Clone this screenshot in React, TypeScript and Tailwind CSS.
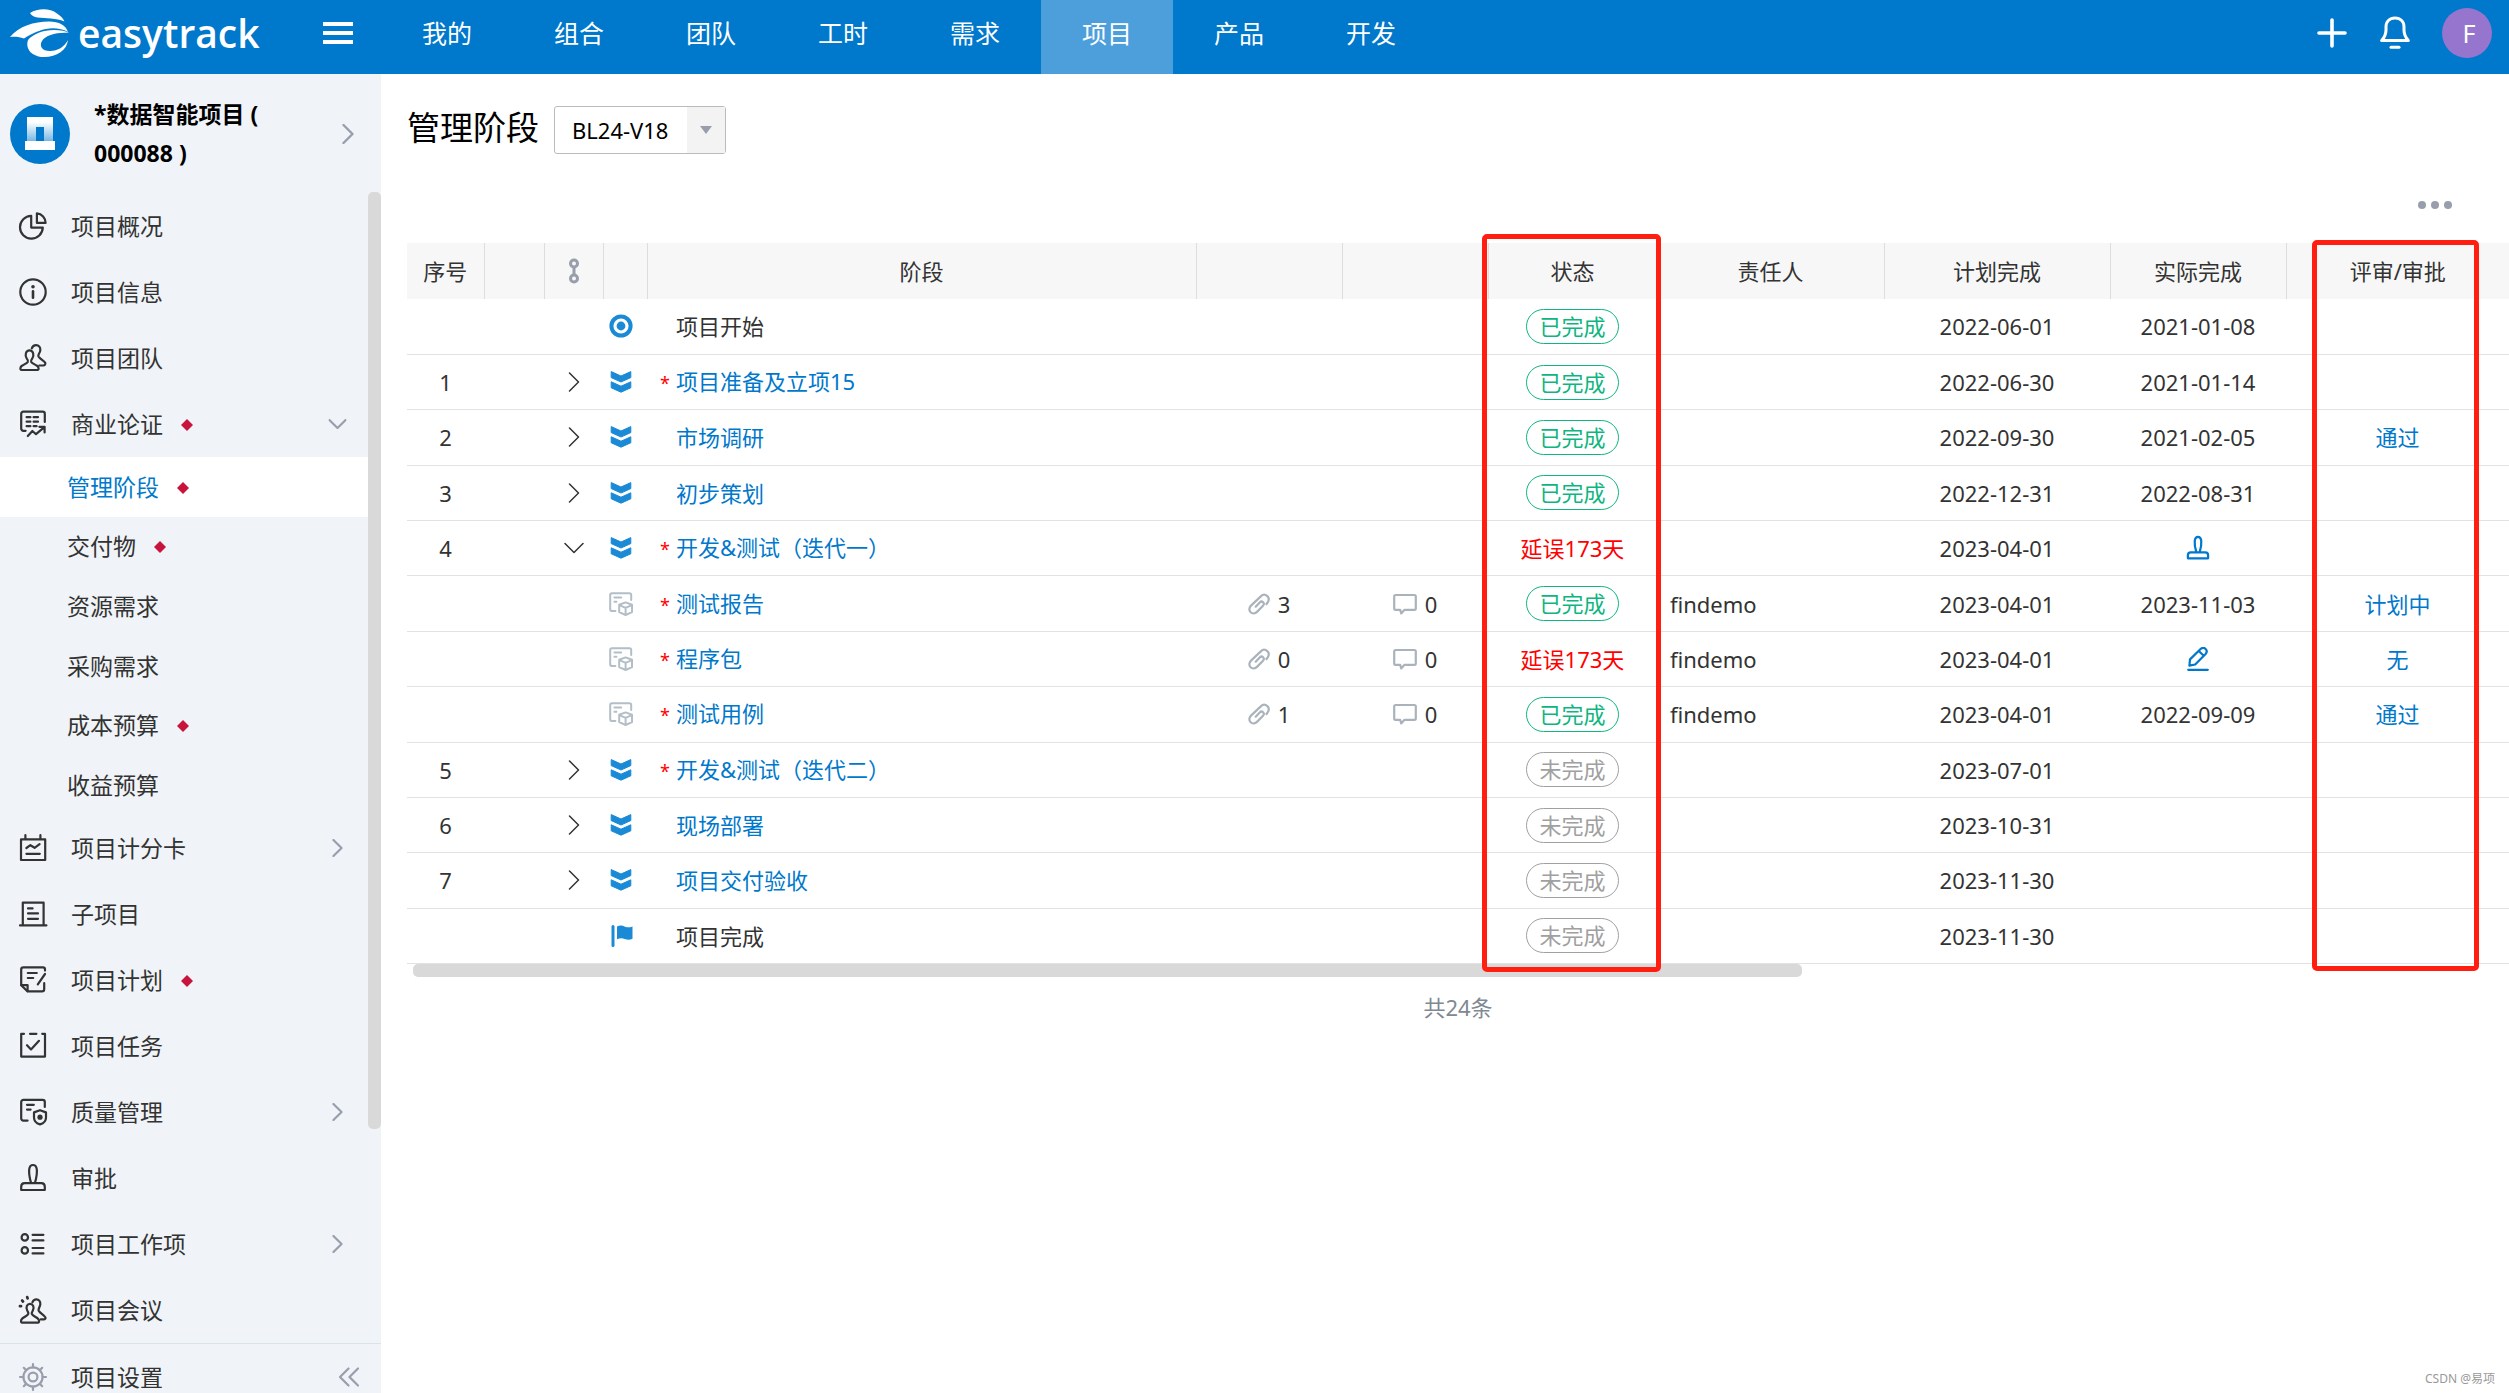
import { useState } from 'react';
import type { ReactNode } from 'react';
import { clsx } from 'clsx';

interface IconProps {
  className?: string;
}

interface MenuItem {
  label: string;
  icon: ReactNode;
  marked?: boolean;
  expandable?: boolean;
  children?: { label: string; marked?: boolean }[];
}

type RowKind = 'start' | 'stage' | 'deliverable' | 'end';

interface StageRow {
  no?: string;
  kind: RowKind;
  open?: boolean;
  required?: boolean;
  name: string;
  files?: number;
  comments?: number;
  status: 'done' | 'todo' | 'late';
  owner?: string;
  planned: string;
  actual?: string;
  action?: 'stamp' | 'edit';
  review?: string;
}

// 28px line icons used in the side menu
function MenuIcon({ children, className }: { children: ReactNode; className?: string }) {
  return (
    <svg
      viewBox="0 0 28 28"
      fill="none"
      stroke="currentColor"
      strokeWidth="2.2"
      strokeLinecap="round"
      strokeLinejoin="round"
      className={clsx('size-7 shrink-0 overflow-visible', className)}
      aria-hidden="true"
    >
      {children}
    </svg>
  );
}

const stampPaths = (
  <>
    <path d="M12 18.6C10.5 13.6 9.8 9.2 10.2 5.4 10.6 2.4 12 1 14 1s3.4 1.4 3.8 4.4C18.2 9.2 17.5 13.6 16 18.6" />
    <path d="M5.5 19.2h17c2 0 3.3 1.6 3.3 3.6V26H2.2v-3.2c0-2 1.3-3.6 3.3-3.6z" />
  </>
);

const teamPaths = (
  <>
    <path d="M2.4 26c-1.3 0-1.4-2.8.2-4 2.2-1.6 5.4-2.6 6.3-4.2.5-1-.2-2-1.2-3.4-1-1.6-1.3-3.5-.8-5.2.6-1.9 2-2.9 3.6-2.9s3 1 3.6 2.9c.5 1.7.2 3.6-.8 5.2-1 1.4-1.7 2.4-1.2 3.4.9 1.6 4.1 2.6 6.3 4.2 1.6 1.2 1.5 4 .2 4z" />
    <path d="M12.8 4.4c.7-2.2 2.2-3.3 4.2-3.3 3 0 4.6 2.5 4.3 5.2-.3 2.6-2.3 4-1.9 6 .5 2.2 6 4.5 6.8 6.4.6 1.6-.4 2.8-1.9 2.8h-4" />
  </>
);

const MENU: MenuItem[] = [
  {
    label: '项目概况',
    icon: (
      <MenuIcon>
        <path d="M12.2 3.8A11.4 11.4 0 1 0 23.8 15.6H12.2z" />
        <path d="M17.9 1.3a9.6 9.6 0 0 1 8.7 9.6h-8.7z" />
      </MenuIcon>
    ),
  },
  {
    label: '项目信息',
    icon: (
      <MenuIcon>
        <circle cx="14" cy="14" r="12.7" />
        <path d="M14 13.4v6.4" strokeWidth="2.6" />
        <circle cx="14" cy="8.8" r="1.8" fill="currentColor" stroke="none" />
      </MenuIcon>
    ),
  },
  { label: '项目团队', icon: <MenuIcon>{teamPaths}</MenuIcon> },
  {
    label: '商业论证',
    marked: true,
    icon: (
      <MenuIcon>
        <path d="M6.6 20.8H4.4A2.2 2.2 0 0 1 2.2 18.6V3.9a2.2 2.2 0 0 1 2.2-2.2h19.2a2.2 2.2 0 0 1 2.2 2.2v8" />
        <path d="M7.6 7.2h3.8M14.6 7.2h4.4M7.6 11.7h3.8M14.6 11.7h4.4M7.6 16.2h3.8M14.6 16.2h3" />
        <path d="m8.8 26 4.6-5 3.6 3.2 8.4-7M20.4 16.8h5.2v5.6" />
      </MenuIcon>
    ),
    children: [
      { label: '管理阶段', marked: true },
      { label: '交付物', marked: true },
      { label: '资源需求' },
      { label: '采购需求' },
      { label: '成本预算', marked: true },
      { label: '收益预算' },
    ],
  },
  {
    label: '项目计分卡',
    expandable: true,
    icon: (
      <MenuIcon>
        <path d="M2 5.4h24.2V26H2zM6.4 1.2v4M21.4 1.2v4M7.4 19.8h13.4" />
        <path d="m7.4 14 4-2.8 4.2 2.6 5-3.6" />
      </MenuIcon>
    ),
  },
  {
    label: '子项目',
    icon: (
      <MenuIcon>
        <path d="M3.8 25.4V2.6h20.8v22.8M1 25.4h26.4" />
        <path d="M9 8.4h4.6M9 13.4h10M9 18.8h10" />
      </MenuIcon>
    ),
  },
  {
    label: '项目计划',
    marked: true,
    icon: (
      <MenuIcon>
        <path d="M26 4.6V3.4a2 2 0 0 0-2-2H4.4a2.2 2.2 0 0 0-2.2 2.2v15.6l6.4 6.2H23a2.2 2.2 0 0 0 2.2-2.2v-6" />
        <path d="M2.4 19.2h6.2v6M8.8 7h9M8.8 12h5.4M26 8l-7.2 10.4" />
      </MenuIcon>
    ),
  },
  {
    label: '项目任务',
    icon: (
      <MenuIcon>
        <path d="M5 1.8H2.2v22.8H26V1.8h-2.8M11 1.8h6.4" />
        <path d="m8 13.2 4 4.2 8-8.6" />
      </MenuIcon>
    ),
  },
  {
    label: '质量管理',
    expandable: true,
    icon: (
      <MenuIcon>
        <path d="M8.6 22.6H4.4a2.2 2.2 0 0 1-2.2-2.2V4a2.2 2.2 0 0 1 2.2-2.2h19.2A2.2 2.2 0 0 1 25.8 4v5" />
        <path d="M8 6.8h6.8M8 11.6h3.6" />
        <path d="m21 12.2 6 2.2v5c0 3.6-2.8 6-6 7-3.2-1-6-3.4-6-7v-5z" />
        <circle cx="21" cy="19.2" r="2.6" fill="currentColor" stroke="none" />
      </MenuIcon>
    ),
  },
  { label: '审批', icon: <MenuIcon>{stampPaths}</MenuIcon> },
  {
    label: '项目工作项',
    expandable: true,
    icon: (
      <MenuIcon>
        <circle cx="5.8" cy="7.4" r="3.2" />
        <circle cx="5.8" cy="20.4" r="3.2" />
        <path d="M13.6 4.8h10.8M13.6 10.4h10.8M13.6 18h10.8M13.6 23.4h10.8" />
      </MenuIcon>
    ),
  },
  {
    label: '项目会议',
    icon: (
      <MenuIcon>
        <path d="M3 26.6c-1.3 0-1.4-2.6.2-4 2-1.8 5.2-2.8 6-4.6.5-1.2-.3-2.2-1-3.6-1.7-3.6 0-6.6 2.8-6.6s4.6 3 2.9 6.6c-.8 1.4-1.5 2.4-1 3.6.8 1.8 4 2.8 6 4.6 1.6 1.4 1.5 4 .2 4z" />
        <path d="M13.4 6.4c.8-2 2-3 3.8-3 3 0 4.4 2.5 4.1 5-.3 2.4-2 3.8-1.7 5.8.4 2.2 5.8 5 6.8 7.2.5 1.2-.4 2-1.6 2h-3" />
        <path d="m8.2 1.2.4 1.2M3.2 4.6l.8.9M1 10.2h1" strokeWidth="2.8" />
      </MenuIcon>
    ),
  },
];

const STAGES: StageRow[] = [
  { kind: 'start', name: '项目开始', status: 'done', planned: '2022-06-01', actual: '2021-01-08' },
  { no: '1', kind: 'stage', required: true, name: '项目准备及立项15', status: 'done', planned: '2022-06-30', actual: '2021-01-14' },
  { no: '2', kind: 'stage', name: '市场调研', status: 'done', planned: '2022-09-30', actual: '2021-02-05', review: '通过' },
  { no: '3', kind: 'stage', name: '初步策划', status: 'done', planned: '2022-12-31', actual: '2022-08-31' },
  { no: '4', kind: 'stage', open: true, required: true, name: '开发&测试（迭代一）', status: 'late', planned: '2023-04-01', action: 'stamp' },
  { kind: 'deliverable', required: true, name: '测试报告', files: 3, comments: 0, status: 'done', owner: 'findemo', planned: '2023-04-01', actual: '2023-11-03', review: '计划中' },
  { kind: 'deliverable', required: true, name: '程序包', files: 0, comments: 0, status: 'late', owner: 'findemo', planned: '2023-04-01', action: 'edit', review: '无' },
  { kind: 'deliverable', required: true, name: '测试用例', files: 1, comments: 0, status: 'done', owner: 'findemo', planned: '2023-04-01', actual: '2022-09-09', review: '通过' },
  { no: '5', kind: 'stage', required: true, name: '开发&测试（迭代二）', status: 'todo', planned: '2023-07-01' },
  { no: '6', kind: 'stage', name: '现场部署', status: 'todo', planned: '2023-10-31' },
  { no: '7', kind: 'stage', name: '项目交付验收', status: 'todo', planned: '2023-11-30' },
  { kind: 'end', name: '项目完成', status: 'todo', planned: '2023-11-30' },
];

const NAV = ['我的', '组合', '团队', '工时', '需求', '项目', '产品', '开发'];

function Chevron({ className }: IconProps) {
  return (
    <svg viewBox="0 0 12 20" fill="none" stroke="currentColor" className={className} aria-hidden="true">
      <path d="m1.5 1 9 9-9 9" strokeLinecap="round" strokeLinejoin="round" />
    </svg>
  );
}

function Diamond() {
  return (
    <svg viewBox="0 0 12 12" className="mt-0.5 ml-[18px] size-3" aria-hidden="true">
      <path d="M6 0l6 6-6 6-6-6z" fill="#c8143c" />
    </svg>
  );
}

function Logo() {
  return (
    <a href="#home" className="flex w-[314px] shrink-0 items-center pl-2.5 text-white">
      <svg viewBox="0 0 60 48" className="h-12 w-[60px]" fill="currentColor" aria-hidden="true">
        <path d="M20 4C28-1 40-1 47 4.500c4 2.500 6 5 7.500 8C46 9 36 9.500 27.500 8.500 24 8 21.500 6.500 20 4z" />
        <path d="M0 28C9 17 24 12.500 39 12.500c10 0 17 4 19 10.500-8-4.500-19-5-29-1-6 2-12 5.500-15 7.500-5-2-10-2-14-1.500z" />
        <path d="M18 31c5-6 15-10 26-10 7 0 12 1 15 3-12-1-23 2-27 8-3 5 0 10 8 10 8 0 14-4 18-11-1 10-11 17-24 17-12 0-19-8-16-17z" />
      </svg>
      <span className="ml-2 font-['Open_Sans'] text-[39px] leading-[48px] font-semibold">easytrack</span>
    </a>
  );
}

function TopBar() {
  return (
    <header className="flex h-[74px] shrink-0 items-stretch bg-[#0078cb] text-white">
      <div className="flex items-center pb-2">
        <Logo />
        <button type="button" aria-label="菜单" className="flex w-[67px] flex-col gap-[5px] pl-[9px]">
          <span className="h-1 w-[30px] bg-white" />
          <span className="h-1 w-[30px] bg-white" />
          <span className="h-1 w-[30px] bg-white" />
        </button>
      </div>
      <nav className="flex">
        {NAV.map((label) => (
          <a
            key={label}
            href={`#${label}`}
            className={clsx(
              'flex w-[132px] items-center justify-center pb-2 text-[25px] leading-[32px]',
              label === '项目' && 'bg-[#4d9fdb]'
            )}
          >
            {label}
          </a>
        ))}
      </nav>
      <div className="ml-auto flex items-center pr-[17px] pb-2">
        <button type="button" aria-label="新建">
          <svg viewBox="0 0 30 30" className="size-[30px]" stroke="currentColor" strokeWidth="3.6" strokeLinecap="round" aria-hidden="true">
            <path d="M15 2v26M2 15h26" />
          </svg>
        </button>
        <button type="button" aria-label="通知" className="ml-[33px]">
          <svg viewBox="0 0 30 34" className="h-[34px] w-[30px]" fill="none" stroke="currentColor" strokeWidth="3" strokeLinecap="round" strokeLinejoin="round" aria-hidden="true">
            <path d="M15 2C9.500 2 6 5.600 6 11v3c0 4-1.200 7-4.300 10.600h26.600C25.200 21 24 18 24 14v-3c0-5.400-3.500-9-9-9z" />
            <path d="M11 31.200h8" />
          </svg>
        </button>
        <button type="button" className="ml-8 size-[50px] rounded-full bg-[#9575cd] pl-1 text-[25px] leading-[50px]">
          F
        </button>
      </div>
    </header>
  );
}

function Sidebar() {
  const [active, setActive] = useState('管理阶段');

  return (
    <aside className="relative flex w-[381px] shrink-0 flex-col bg-[#f0f4f8] text-[23px] leading-7 text-[#333]">
      <div className="flex h-[119px] shrink-0 items-center pl-2.5">
        <span className="flex size-[60px] shrink-0 items-center justify-center rounded-full bg-[#0078cb]">
          <svg viewBox="0 0 32 34" className="h-[34px] w-8" aria-hidden="true">
            <defs>
              <linearGradient id="badge" x1="0" y1="0" x2="0" y2="1">
                <stop offset="0.2" stopColor="#fff" />
                <stop offset="1" stopColor="#6fb4e3" />
              </linearGradient>
            </defs>
            <path d="M3 0h26v25H20V10h-8v15H3z" fill="url(#badge)" />
            <path d="M1 24h30v9H1z" fill="#fff" />
          </svg>
        </span>
        <h2 className="ml-6 w-[230px] text-[23px] leading-[39px] font-bold text-black">*数据智能项目 ( 000088 )</h2>
        <button type="button" aria-label="切换项目" className="ml-[18px] text-[#999eac]">
          <Chevron className="h-5 w-3 stroke-[2.4]" />
        </button>
      </div>

      <ul className="min-h-0 w-[368px] flex-1 overflow-hidden">
        {MENU.map((item) => (
          <li key={item.label}>
            <button type="button" className="flex h-[66px] w-full items-center pr-[25px] pl-[19px] text-left">
              {item.icon}
              <span className="ml-6">{item.label}</span>
              {item.marked && <Diamond />}
              {(item.expandable || item.children) && (
                <Chevron
                  className={clsx('ml-auto h-[18px] w-[11px] stroke-[2.4] text-[#999eac]', item.children && 'rotate-90')}
                />
              )}
            </button>
            {item.children && (
              <ul className="grid h-[358px] grid-rows-6">
                {item.children.map((child) => (
                  <li key={child.label}>
                    <button
                      type="button"
                      onClick={() => setActive(child.label)}
                      className={clsx(
                        'flex h-full w-full items-center pl-[67px]',
                        active === child.label && 'bg-white text-[#0078cb]'
                      )}
                    >
                      {child.label}
                      {child.marked && <Diamond />}
                    </button>
                  </li>
                ))}
              </ul>
            )}
          </li>
        ))}
      </ul>
      <span className="absolute top-[118px] right-0 h-[937px] w-[13px] rounded-[5px] bg-[#d9d9d9]" />

      <div className="flex h-[50px] shrink-0 items-start border-t border-[#dae2ea] pt-[19px] pr-[22px] pl-[19px]">
        <MenuIcon className="text-[#999eac]">
          <circle cx="14" cy="14" r="9.600" />
          <circle cx="14" cy="14" r="4.400" />
          <path d="M14 4.400V1M14 23.600V27M4.400 14H1M23.600 14H27M7.200 7.200 4.800 4.800M20.800 20.800l2.400 2.400M7.200 20.800l-2.400 2.400M20.800 7.200l2.400-2.400" />
        </MenuIcon>
        <a href="#settings" className="ml-6">
          项目设置
        </a>
        <button type="button" aria-label="收起" className="ml-auto flex pt-1 text-[#999eac]">
          <svg viewBox="0 0 20 20" className="size-5" fill="none" stroke="currentColor" strokeWidth="2.2" strokeLinecap="round" strokeLinejoin="round">
            <path d="m9.500 1.500-8.500 8.500 8.500 8.500M19 1.500 10.500 10l8.500 8.500" />
          </svg>
        </button>
      </div>
    </aside>
  );
}

function KindIcon({ kind }: { kind: RowKind }) {
  if (kind === 'start') {
    return (
      <svg viewBox="0 0 24 24" className="size-6" fill="none" aria-hidden="true">
        <circle cx="12" cy="12" r="9.600" stroke="#1a8ad6" strokeWidth="4" />
        <circle cx="12" cy="12" r="4.400" fill="#1a8ad6" />
      </svg>
    );
  }
  if (kind === 'stage') {
    return (
      <svg viewBox="0 0 24 24" className="size-6" fill="#1a8ad6" stroke="#1a8ad6" strokeWidth="1" strokeLinejoin="round" aria-hidden="true">
        <path d="M2.200 1.600 12 6l9.800-4.400v6L12 12 2.200 7.600z" />
        <path d="M2.200 11.800 12 16.200l9.800-4.400v6L12 22.200l-9.800-4.400z" />
      </svg>
    );
  }
  if (kind === 'end') {
    return (
      <svg viewBox="0 0 24 24" className="size-6" fill="#1a8ad6" aria-hidden="true">
        <rect x="2.500" y="1" width="3" height="22" rx="1.500" />
        <path d="M8 2.500c3-1.500 5.500-1 8 .2 2.500 1 4.700.8 7.500-.2v12.300c-3 1.200-5.200 1-7.700.2-2.500-1-5-1-7.800.2z" />
      </svg>
    );
  }
  return (
    <svg viewBox="0 0 24 24" className="size-6" fill="none" stroke="#b4bec6" strokeWidth="2" strokeLinecap="round" strokeLinejoin="round" aria-hidden="true">
      <path d="M6.400 19H3a1.800 1.800 0 0 1-1.800-1.800V3A1.800 1.800 0 0 1 3 1.200h17.400A1.800 1.800 0 0 1 22.200 3v5M5.400 5.600h6.800M5.400 9.800h2" />
      <path d="m16.600 10.400 6.400 2.400v7.400l-6.400 2.800-6.400-2.800v-7.400zM10.400 13.200l6.200 2.600 6.200-2.600M16.600 15.800v6.800" />
    </svg>
  );
}

function ClipIcon() {
  return (
    <svg viewBox="0 0 22 22" className="size-[22px]" fill="none" stroke="#aab3bc" strokeWidth="2.2" strokeLinecap="round" strokeLinejoin="round" aria-hidden="true">
      <path d="m18.500 11 1.200-1.700c1.500-2.200 1.300-4.600-.4-6.200-1.900-1.700-4.600-1.600-6.500.3L3 12.600c-2 2-2.200 4.900-.4 6.700 1.800 1.700 4.500 1.500 6.400-.4l6-6.200c1-1.100 1-2.600.1-3.500-1-.9-2.400-.8-3.400.3l-4 4.200" />
    </svg>
  );
}

function CommentIcon() {
  return (
    <svg viewBox="0 0 24 22" className="h-[22px] w-6" fill="none" stroke="#aab3bc" strokeWidth="2.200" strokeLinejoin="round" aria-hidden="true">
      <path d="M2.600 2h18.800c.8 0 1.400.6 1.400 1.400v12c0 .8-.6 1.400-1.400 1.400H11.500L8.200 20.400l-1-3.600H2.600c-.8 0-1.400-.6-1.400-1.400v-12C1.200 2.600 1.800 2 2.600 2z" />
    </svg>
  );
}

function StatusCell({ status }: { status: StageRow['status'] }) {
  if (status === 'late') return <span className="text-[#f00]">延误173天</span>;
  return (
    <span
      className={clsx(
        'inline-block h-[35px] w-[93px] rounded-full border align-middle leading-[33px]',
        status === 'done' ? 'border-[#0fb57f] text-[#0fb57f]' : 'border-[#a0a0a0] text-[#a0a0a0]'
      )}
    >
      {status === 'done' ? '已完成' : '未完成'}
    </span>
  );
}

function ActionIcon({ action }: { action: 'stamp' | 'edit' }) {
  return (
    <button type="button" aria-label={action === 'stamp' ? '审批' : '编辑'} className="mx-auto block text-[#0078cb]">
      {action === 'stamp' ? (
        <MenuIcon className="size-6! stroke-[2.6]">{stampPaths}</MenuIcon>
      ) : (
        <svg viewBox="0 0 24 24" className="size-6" fill="none" stroke="currentColor" strokeWidth="2.200" strokeLinecap="round" strokeLinejoin="round" aria-hidden="true">
          <path d="M3.400 18.600 4 12.400 14.600 2c1.600-1.500 3.600-1.500 5 0s1.400 3.400 0 4.900L9.200 17.500zM13 4.200l4.800 4.600M2.200 22.800h19.600" />
        </svg>
      )}
    </button>
  );
}

function StageTable() {
  const head = 'border-r border-[#ddd] font-normal';

  return (
    <div className="relative">
      <table className="h-[721px] w-full table-fixed border-collapse text-center text-[22px] leading-7 text-[#333]">
        <colgroup>
          <col className="w-[77px]" />
          <col className="w-[60px]" />
          <col className="w-[59px]" />
          <col className="w-[44px]" />
          <col />
          <col className="w-[146px]" />
          <col className="w-[146px]" />
          <col className="w-[169px]" />
          <col className="w-[227px]" />
          <col className="w-[226px]" />
          <col className="w-[176px]" />
          <col className="w-[223px]" />
        </colgroup>
        <thead>
          <tr className="h-14 bg-[#f7f7f7]">
            <th className={head}>序号</th>
            <th className={head} />
            <th className={head}>
              <svg viewBox="0 0 12 26" className="mx-auto h-[26px] w-3" fill="none" stroke="#999eac" strokeWidth="3" aria-hidden="true">
                <circle cx="6" cy="5.500" r="3.500" />
                <circle cx="6" cy="20.500" r="3.500" />
                <path d="M6 9v8" />
              </svg>
            </th>
            <th className={head} />
            <th className={head}>阶段</th>
            <th className={head} />
            <th className={head} />
            <th className={head}>状态</th>
            <th className={head}>责任人</th>
            <th className={head}>计划完成</th>
            <th className={head}>实际完成</th>
            <th className="font-normal">评审/审批</th>
          </tr>
        </thead>
        <tbody>
          {STAGES.map((row) => (
            <tr key={row.name} className="h-[55px] border-b border-[#e2e2e2]">
              <td>{row.no}</td>
              <td />
              <td>
                {row.kind === 'stage' && (
                  <button type="button" aria-label="展开" className="block w-full">
                    <Chevron className={clsx('mx-auto h-5 w-3 stroke-[1.5]', row.open && 'rotate-90')} />
                  </button>
                )}
              </td>
              <td className="pl-1.5">
                <KindIcon kind={row.kind} />
              </td>
              <td className="text-left whitespace-nowrap">
                <span className="inline-block w-[29px] pr-1.5 text-right text-[18px] text-[#f00]">{row.required && '*'}</span>
                {row.kind === 'start' || row.kind === 'end' ? (
                  row.name
                ) : (
                  <a href={`#${row.name}`} className="text-[#0078cb]">
                    {row.name}
                  </a>
                )}
              </td>
              <td>
                {row.files !== undefined && (
                  <span className="flex items-center justify-center gap-2">
                    <ClipIcon />
                    {row.files}
                  </span>
                )}
              </td>
              <td>
                {row.comments !== undefined && (
                  <span className="flex items-center justify-center gap-2">
                    <CommentIcon />
                    {row.comments}
                  </span>
                )}
              </td>
              <td>
                <StatusCell status={row.status} />
              </td>
              <td className="pl-[13px] text-left">{row.owner}</td>
              <td>{row.planned}</td>
              <td>{row.action ? <ActionIcon action={row.action} /> : row.actual}</td>
              <td>
                {row.review && (
                  <a href="#review" className="text-[#0078cb]">
                    {row.review}
                  </a>
                )}
              </td>
            </tr>
          ))}
        </tbody>
      </table>
      <div className="ml-1.5 h-[13px] w-[1389px] rounded-[5px] bg-[#d9d9d9]" />

      {/* highlighted columns */}
      <div className="pointer-events-none absolute -top-[9px] right-[848px] h-[738px] w-[179px] rounded-[5px] border-5 border-[#ff1e10]" />
      <div className="pointer-events-none absolute -top-[3px] right-[30px] h-[731px] w-[167px] rounded-[5px] border-5 border-[#ff1e10]" />
    </div>
  );
}

export default function App() {
  return (
    <div className="flex h-screen flex-col overflow-hidden bg-white font-['Noto_Sans','Noto_Sans_CJK_SC',sans-serif]">
      <TopBar />
      <div className="flex min-h-0 flex-1">
        <Sidebar />
        <main className="min-w-0 flex-1 pl-[26px]">
          <div className="flex items-center pt-8">
            <h1 className="pb-1 text-[33px] leading-[44px] text-black">管理阶段</h1>
            <div className="relative ml-[15px]">
              <select
                aria-label="版本"
                className="block h-12 w-[172px] appearance-none rounded-[3px] border border-[#bbb] bg-white pl-[17px] text-[22px] text-black"
              >
                <option>BL24-V18</option>
              </select>
              <span className="pointer-events-none absolute inset-y-px right-px flex w-[38px] items-center justify-center bg-[#f3f3f3]">
                <svg viewBox="0 0 12 8" className="h-2 w-3" aria-hidden="true">
                  <path d="M0 0h12L6 8z" fill="#999eac" />
                </svg>
              </span>
            </div>
          </div>
          <div className="flex h-[89px] items-center justify-end pt-[13px] pr-[57px]">
            <button type="button" aria-label="更多" className="flex gap-[5px]">
              <span className="size-2 rounded-full bg-[#999eac]" />
              <span className="size-2 rounded-full bg-[#999eac]" />
              <span className="size-2 rounded-full bg-[#999eac]" />
            </button>
          </div>
          <StageTable />
          <p className="mt-4 text-center text-[22px] leading-7 text-[#808892]">共24条</p>
        </main>
      </div>
      <span className="absolute right-3.5 bottom-1.5 text-[12px] leading-4 text-[#999]">CSDN @易项</span>
    </div>
  );
}
